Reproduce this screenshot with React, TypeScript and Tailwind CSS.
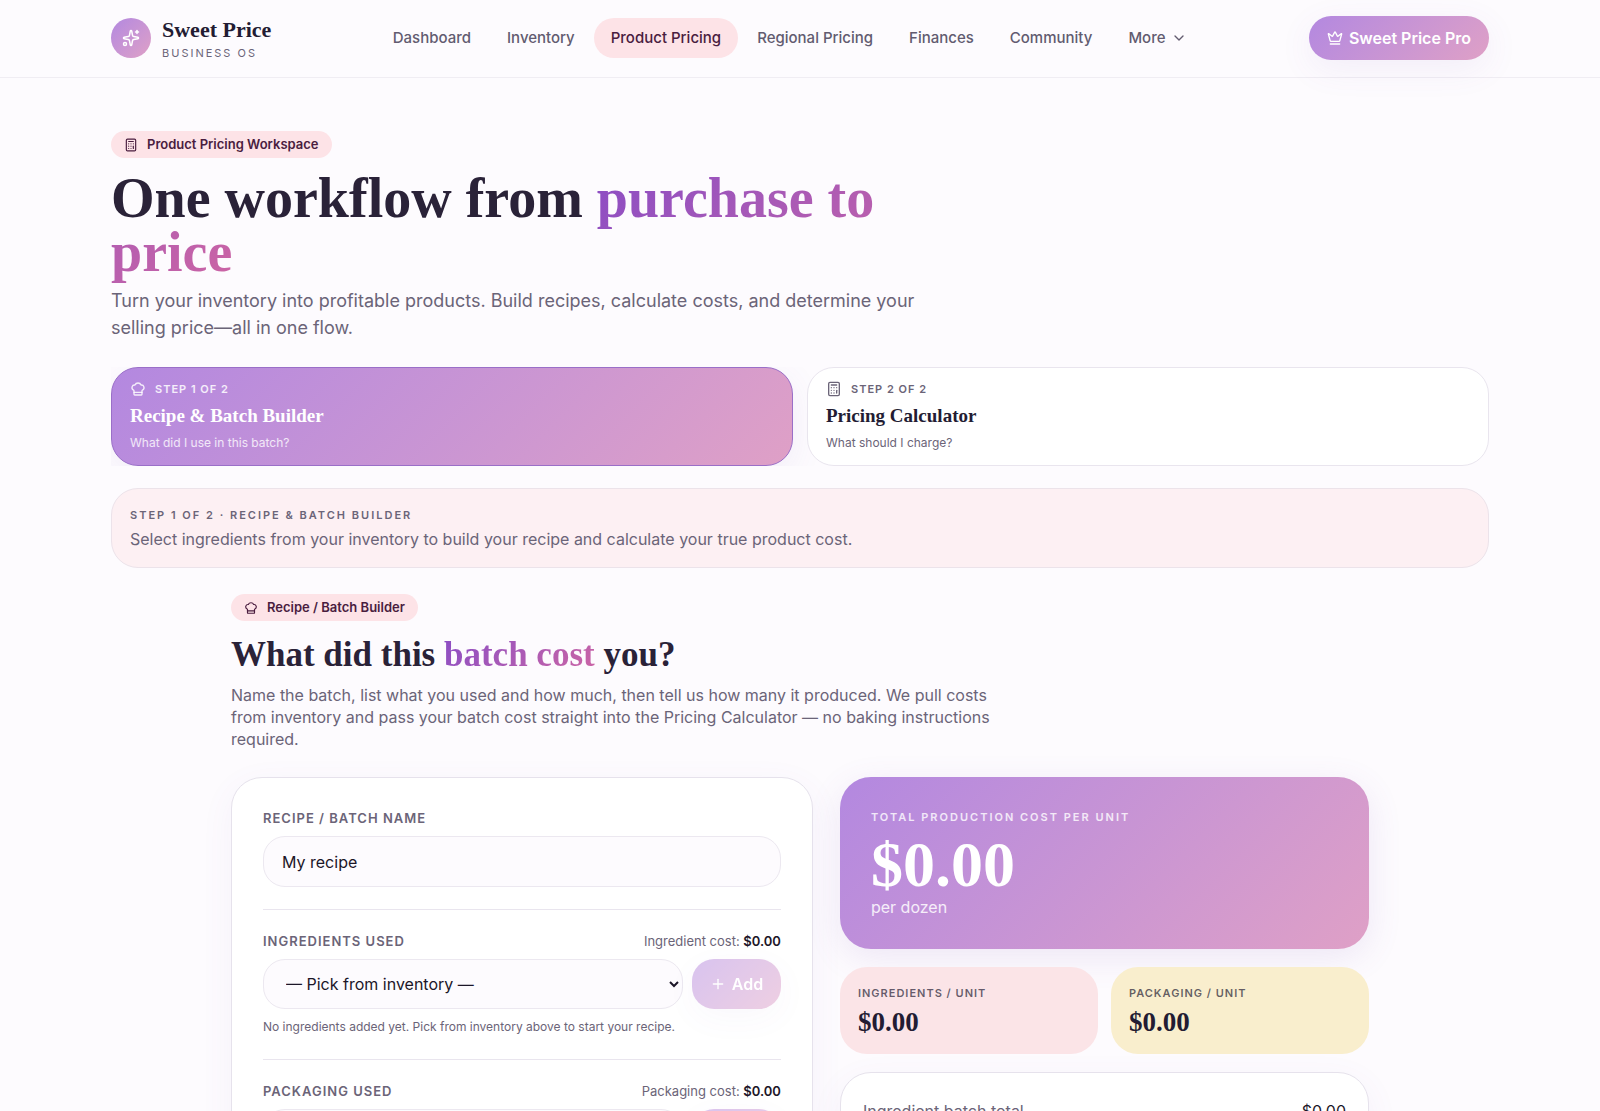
import { useState } from 'react';
import type { ReactNode } from 'react';
import { Calculator, ChefHat, ChevronDown, Crown, Plus, Sparkles } from 'lucide-react';
import type { LucideIcon } from 'lucide-react';

const NAV_ITEMS = ['Dashboard', 'Inventory', 'Product Pricing', 'Regional Pricing', 'Finances', 'Community'];

const STEPS = [
  { icon: ChefHat, label: 'Step 1 of 2', title: 'Recipe & Batch Builder', hint: 'What did I use in this batch?' },
  { icon: Calculator, label: 'Step 2 of 2', title: 'Pricing Calculator', hint: 'What should I charge?' },
];

function Header() {
  return (
    <header className="border-b border-[#f0edf3] pb-px">
      <div className="mx-auto flex h-[76px] max-w-[1422px] items-center justify-between px-[22px]">
        <a href="#" className="flex items-center gap-[11px]">
          <span className="flex size-10 items-center justify-center rounded-full bg-linear-135 from-[#b388e0] to-[#dfa0c6] text-white">
            <Sparkles size={18} />
          </span>
          <span className="flex flex-col pt-1">
            <span className="font-['Liberation_Serif',serif] text-[22px] leading-[26px] font-bold text-[#231c33]">Sweet Price</span>
            <span className="text-[11px] leading-5 tracking-[2px] text-[#6b6478] uppercase">Business OS</span>
          </span>
        </a>

        <nav className="flex items-center gap-[2px]">
          {NAV_ITEMS.map((item) => (
            <a
              key={item}
              href="#"
              className={
                item === 'Product Pricing'
                  ? 'rounded-full bg-[#fde3e7] px-[17px] py-2 text-[15px] leading-6 font-medium text-[#4a1d3f]'
                  : 'rounded-full px-[17px] py-2 text-[15px] leading-6 font-medium text-[#625b70]'
              }
            >
              {item}
            </a>
          ))}
          <button type="button" className="flex items-center gap-[6px] rounded-full px-[17px] py-2 text-[15px] leading-6 font-medium text-[#625b70]">
            More
            <ChevronDown size={16} />
          </button>
        </nav>

        <a
          href="#"
          className="flex h-11 items-center gap-[6px] rounded-full bg-linear-135 from-[#b388e0] to-[#dfa0c6] px-[18px] text-[16px] font-semibold text-white shadow-[0_9px_34px_rgba(120,80,180,0.08)]"
        >
          <Crown size={16} />
          Sweet Price Pro
        </a>
      </div>
    </header>
  );
}

function Badge({ icon: Icon, children }: { icon: LucideIcon; children: ReactNode }) {
  return (
    <span className="inline-flex h-[27px] items-center gap-[9px] rounded-full bg-[#fde3e7] px-[13px] text-[13px] font-semibold text-[#4a1d3f]">
      <Icon size={14} />
      {children}
    </span>
  );
}

function StepTabs() {
  const [active, setActive] = useState(0);

  return (
    <div className="mt-[26px] grid grid-cols-2 gap-[14px] overflow-hidden">
      {STEPS.map(({ icon: Icon, label, title, hint }, i) => (
        <button
          key={title}
          type="button"
          onClick={() => setActive(i)}
          className={
            i === active
              ? 'rounded-[27px] border border-[#9a6fc8] bg-linear-135 from-[#b388e0] to-[#dfa0c6] px-[18px] pt-[12px] pb-[13px] text-left text-white shadow-[0_9px_34px_rgba(120,80,180,0.08)]'
              : 'rounded-[27px] border border-[#e9e5ee] bg-white px-[18px] pt-[12px] pb-[13px] text-left text-[#231c33]'
          }
        >
          <span className={i === active ? 'flex items-center gap-[9px] text-white/85' : 'flex items-center gap-[9px] text-[#6b6478]'}>
            <Icon size={16} />
            <span className="text-[11px] leading-[18px] font-semibold tracking-[1px] uppercase">{label}</span>
          </span>
          <span className="mt-[5px] block font-['Liberation_Serif',serif] text-[19px] leading-[26px] font-bold">{title}</span>
          <span className={i === active ? 'mt-[5px] block text-[12px] leading-[18px] text-white/80' : 'mt-[5px] block text-[12px] leading-[18px] text-[#6b6478]'}>
            {hint}
          </span>
        </button>
      ))}
    </div>
  );
}

function InventoryPicker({ id, title, costLabel, note }: { id: string; title: string; costLabel: string; note?: string }) {
  return (
    <div className="mt-[22px] border-t border-[#e9e5ee] pt-[22px]">
      <div className="flex items-center justify-between">
        <label htmlFor={id} className="text-[13px] leading-[18px] font-semibold tracking-[1px] text-[#6b6478] uppercase">
          {title}
        </label>
        <span className="text-[13px] leading-[18px] text-[#6b6478]">
          {costLabel}: <strong className="font-semibold text-[#1c1628]">$0.00</strong>
        </span>
      </div>
      <div className="mt-[9px] flex gap-[9px]">
        <select
          id={id}
          className="h-[50px] min-w-0 flex-1 rounded-[22px] border border-[#ece8f0] bg-[#fdfbfe] px-[18px] text-[16px] text-[#1c1628]"
        >
          <option>— Pick from inventory —</option>
        </select>
        <button
          type="button"
          disabled
          className="flex h-[50px] w-[89px] items-center justify-center gap-[6px] rounded-[22px] bg-linear-135 from-[#b388e0] to-[#dfa0c6] text-[16px] font-semibold text-white opacity-50 shadow-[0_9px_34px_rgba(120,80,180,0.08)]"
        >
          <Plus size={16} />
          Add
        </button>
      </div>
      {note && <p className="mt-2 text-[12px] leading-5 text-[#6b6478]">{note}</p>}
    </div>
  );
}

function BatchForm() {
  return (
    <form className="rounded-[31px] border border-[#e6e2ec] bg-white p-[31px] shadow-[0_9px_34px_rgba(120,80,180,0.06)]">
      <label htmlFor="batch-name" className="block text-[13px] leading-[18px] font-semibold tracking-[1px] text-[#6b6478] uppercase">
        Recipe / Batch Name
      </label>
      <input
        id="batch-name"
        defaultValue="My recipe"
        className="mt-[9px] h-[51px] w-full rounded-[22px] border border-[#ece8f0] bg-[#fdfbfe] px-[18px] text-[16px] text-[#1c1628]"
      />
      <InventoryPicker
        id="ingredients"
        title="Ingredients Used"
        costLabel="Ingredient cost"
        note="No ingredients added yet. Pick from inventory above to start your recipe."
      />
      <InventoryPicker id="packaging" title="Packaging Used" costLabel="Packaging cost" />
    </form>
  );
}

function UnitTile({ label, tint }: { label: string; tint: string }) {
  return (
    <div className={`rounded-[27px] px-[18px] py-[17px] ${tint}`}>
      <div className="text-[11px] leading-[18px] font-semibold tracking-[1px] text-[#231c33]/70 uppercase">{label}</div>
      <div className="mt-[5px] font-['Liberation_Serif',serif] text-[27px] leading-[30px] font-bold text-[#231c33]">$0.00</div>
    </div>
  );
}

function CostSummary() {
  return (
    <aside className="flex flex-col gap-[18px]">
      <div className="rounded-[31px] bg-linear-135 from-[#b388e0] to-[#dfa0c6] px-[31px] pt-[31px] pb-[30px] text-white shadow-[0_9px_34px_rgba(120,80,180,0.12)]">
        <div className="text-[11px] leading-[18px] font-semibold tracking-[2px] text-white/80 uppercase">Total production cost per unit</div>
        <div className="mt-[9px] font-['Liberation_Serif',serif] text-[64px] leading-[60px] font-bold">$0.00</div>
        <div className="text-[16px] leading-6 text-white/85">per dozen</div>
      </div>
      <div className="grid grid-cols-2 gap-[13px]">
        <UnitTile label="Ingredients / unit" tint="bg-[#fbe4e7]" />
        <UnitTile label="Packaging / unit" tint="bg-[#f9eecd]" />
      </div>
      <div className="flex-1 rounded-[31px] border border-[#e6e2ec] bg-white px-[22px] py-[26px] shadow-[0_9px_34px_rgba(120,80,180,0.06)]">
        <div className="flex justify-between text-[16px] leading-6">
          <span className="text-[#6b6478]">Ingredient batch total</span>
          <span className="text-[#1c1628]">$0.00</span>
        </div>
      </div>
    </aside>
  );
}

export default function App() {
  return (
    <div className="h-screen overflow-y-auto bg-[#fdfbfe] font-[Inter,sans-serif]">
      <Header />
      <main className="mx-auto max-w-[1422px] px-[22px] pt-[53px] pb-[54px]">
        <Badge icon={Calculator}>Product Pricing Workspace</Badge>
        <h1 className="mt-[13px] max-w-[820px] font-['Liberation_Serif',serif] text-[56px] leading-[54px] font-bold text-[#2a2238]">
          One workflow from{' '}
          <span className="bg-linear-135 from-[#8b4cc4] to-[#cc64a4] bg-clip-text text-transparent">purchase to price</span>
        </h1>
        <p className="mt-[8px] max-w-[853px] text-[18px] leading-[27px] text-[#6b6478]">
          Turn your inventory into profitable products. Build recipes, calculate costs, and determine your selling price—all in one flow.
        </p>

        <StepTabs />

        <section className="mt-[22px] rounded-[27px] border border-[#ece3ea] bg-[#fdf0f3] px-[18px] py-[17px]">
          <div className="text-[11px] leading-[18px] font-semibold tracking-[2px] text-[#6b6478] uppercase">
            Step 1 of 2 · Recipe &amp; Batch Builder
          </div>
          <p className="mt-[4px] text-[16px] leading-[22px] text-[#6b6478]">
            Select ingredients from your inventory to build your recipe and calculate your true product cost.
          </p>
        </section>

        <section className="mx-auto mt-[26px] max-w-[1138px]">
          <Badge icon={ChefHat}>Recipe / Batch Builder</Badge>
          <h2 className="mt-[14px] font-['Liberation_Serif',serif] text-[35px] leading-[40px] font-bold text-[#2a2238]">
            What did this{' '}
            <span className="bg-linear-135 from-[#8b4cc4] to-[#cc64a4] bg-clip-text text-transparent">batch cost</span> you?
          </h2>
          <p className="mt-[9px] max-w-[768px] text-[16px] leading-[22px] text-[#6b6478]">
            Name the batch, list what you used and how much, then tell us how many it produced. We pull costs from inventory and pass your
            batch cost straight into the Pricing Calculator — no baking instructions required.
          </p>

          <div className="mt-[27px] grid grid-cols-[11fr_10fr] gap-[27px]">
            <BatchForm />
            <CostSummary />
          </div>
        </section>
      </main>
    </div>
  );
}
